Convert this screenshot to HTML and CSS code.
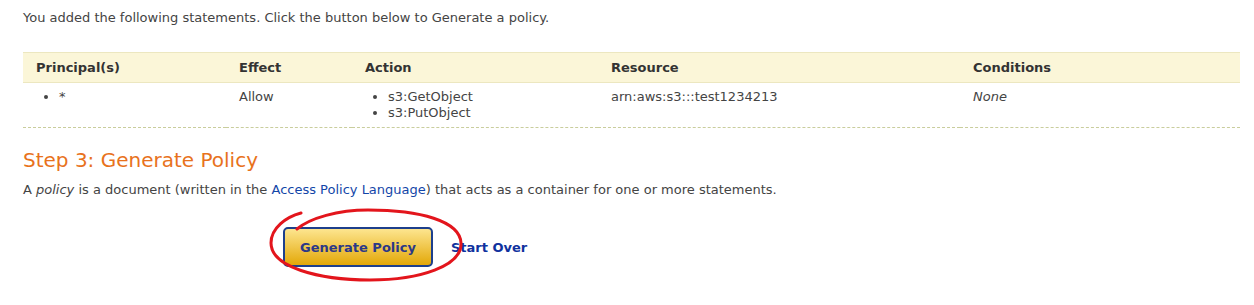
FILE: index.html
```html
<!DOCTYPE html>
<html lang="en">
<head>
  <meta charset="UTF-8" />
  <title>AWS Policy Generator</title>
  <link rel="stylesheet" href="styles.css">
</head>
<body>

<div class="page">
  <p class="intro">You added the following statements. Click the button below to Generate a policy.</p>

  <table class="statements">
    <thead>
      <tr>
        <th class="col-principal">Principal(s)</th>
        <th class="col-effect">Effect</th>
        <th class="col-action">Action</th>
        <th class="col-resource">Resource</th>
        <th>Conditions</th>
      </tr>
    </thead>
    <tbody>
      <tr>
        <td><ul class="list"><li>*</li></ul></td>
        <td>Allow</td>
        <td>
          <ul class="list">
            <li>s3:GetObject</li>
            <li>s3:PutObject</li>
          </ul>
        </td>
        <td>arn:aws:s3:::test1234213</td>
        <td><em>None</em></td>
      </tr>
    </tbody>
  </table>

  <h2 class="step">Step 3: Generate Policy</h2>
  <p class="desc">A <em>policy</em> is a document (written in the <a href="#">Access Policy Language</a>) that acts as a container for one or more statements.</p>

  <div class="actions">
    <div class="btn-wrap">
      <button class="generate">Generate Policy</button>
      <!-- red hand drawn circle -->
      <svg class="scribble" viewBox="260 200 210 90">
        <path d="M301 213 C286 217 271 228 271 243 C271 267 318 280 370 280 C420 280 462 266 461 243 C460 221 420 210 368 210 C338 210 310 218 297 229" fill="none" stroke="#e3151c" stroke-width="3" stroke-linecap="round" />
      </svg>
    </div>
    <a href="#" class="start-over">Start Over</a>
  </div>
</div>

</body>
</html>
```

FILE: styles.css
```css
body {
  margin: 0;
  font-family: 'DejaVu Sans', Verdana, sans-serif;
  font-size: 13px;
  color: #444;
  background: #fff;
}
.page {
  padding: 10px 14px 40px 23px;
}
.intro {
  margin: 0;
  line-height: 16px;
  color: #444;
}
.statements {
  width: 100%;
  margin-top: 26px;
  border-collapse: collapse;
}
.statements th {
  background: #fbf6d8;
  border-top: 1px solid #ece7c0;
  border-bottom: 1px solid #ece7c0;
  text-align: left;
  font-weight: bold;
  color: #333;
  height: 29px;
  padding: 0 0 0 13px;
}
.statements td {
  vertical-align: top;
  padding: 6px 0 0 13px;
  height: 38px;
  line-height: 16px;
  border-bottom: 1px dashed #c9cd9c;
}
.col-principal { width: 190px; }
.col-effect { width: 113px; }
.col-action { width: 233px; }
.col-resource { width: 349px; }
.list {
  margin: 0;
  padding-left: 23px;
}
.step {
  margin: 20px 0 0;
  font-size: 20px;
  font-weight: normal;
  color: #e8721c;
  line-height: 24px;
}
.desc {
  margin: 10px 0 0;
  line-height: 16px;
}
.desc a {
  color: #1346a8;
  text-decoration: none;
}
.actions {
  display: flex;
  align-items: center;
  gap: 18px;
  margin-top: 29px;
  padding-left: 260px;
}
.btn-wrap {
  position: relative;
}
.generate {
  display: block;
  width: 150px;
  height: 40px;
  border: 2px solid #1d3f8c;
  border-radius: 5px;
  background: linear-gradient(#fde58f, #e3a808);
  color: #2b3888;
  font-family: 'DejaVu Sans', Verdana, sans-serif;
  font-size: 13px;
  font-weight: bold;
  padding: 0;
}
.scribble {
  position: absolute;
  left: -23px;
  top: -27px;
  width: 210px;
  height: 90px;
  overflow: visible;
  pointer-events: none;
}
.start-over {
  color: #10329e;
  font-weight: bold;
  font-size: 13px;
  text-decoration: none;
}
```
